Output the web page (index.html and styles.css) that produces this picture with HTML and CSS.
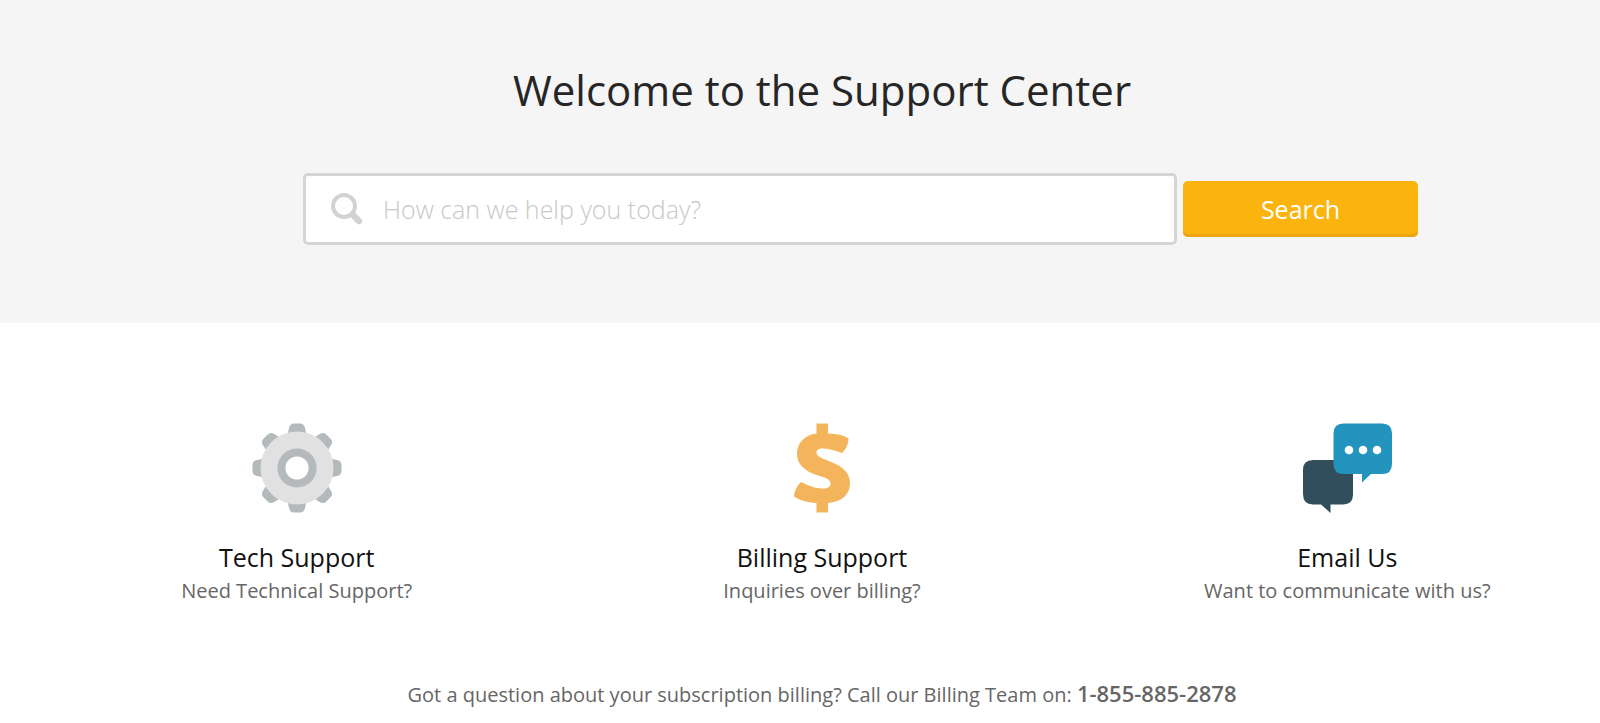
FILE: index.html
```
<!DOCTYPE html>
<html lang="en">
<head>
    <meta charset="UTF-8">
    <meta name="viewport" content="width=device-width, initial-scale=1.0">
    <title>Support Center</title>
    <link rel="stylesheet" href="styles.css">
</head>
<body>
    <header class="hero">
        <h1 class="hero-title">Welcome to the Support Center</h1>
        <form class="search-form">
            <label class="search-box">
                <svg class="search-icon" viewBox="0 0 32 32" aria-hidden="true">
                    <circle cx="13" cy="13" r="11" fill="none" stroke="#d2d2d2" stroke-width="4"/>
                    <path d="M22 22l6 6" stroke="#d2d2d2" stroke-width="6.5" stroke-linecap="round"/>
                </svg>
                <input type="text" class="search-input" aria-label="Search" placeholder="How can we help you today?">
            </label>
            <button type="submit" class="btn-search">Search</button>
        </form>
    </header>

    <main class="support">
        <div class="topics">
            <section class="topic">
                <svg class="topic-icon" viewBox="0 0 90 90" aria-hidden="true">
                    <defs>
                        <path id="tooth" d="M35.500 12L37 5Q38 0.500 42 0.500H48Q52 0.500 53 5L54.500 12Z"/>
                    </defs>
                    <g fill="#b4b9bc">
                        <use href="#tooth"/>
                        <use href="#tooth" transform="rotate(45 45 45)"/>
                        <use href="#tooth" transform="rotate(90 45 45)"/>
                        <use href="#tooth" transform="rotate(135 45 45)"/>
                        <use href="#tooth" transform="rotate(180 45 45)"/>
                        <use href="#tooth" transform="rotate(225 45 45)"/>
                        <use href="#tooth" transform="rotate(270 45 45)"/>
                        <use href="#tooth" transform="rotate(315 45 45)"/>
                    </g>
                    <circle cx="45" cy="45" r="36.5" fill="#e1e1e1"/>
                    <circle cx="45" cy="45" r="19.6" fill="#b4b9bc"/>
                    <circle cx="45" cy="45" r="11.6" fill="#fff"/>
                </svg>
                <h2 class="topic-title">Tech Support</h2>
                <p class="topic-text">Need Technical Support?</p>
            </section>
            <section class="topic">
                <svg class="topic-icon" viewBox="0 0 90 90" aria-hidden="true">
                    <path fill="#f4b45b" d="M39.500 0.500H51V10.500C60 11 68 12.500 71.500 15.500C71.500 21 69 26.500 65 30C57 27 51 25.500 46 25.500C41.500 25.500 39.500 27 39.500 29.500C39.500 33.500 45 35 53 38.500C66 43.500 73 50 73 60C73 71.500 65 79 51 80V89.500H39.500V80C30 79.500 21 76.500 17 73.500C17 69 20 62.500 24 59C33 63.500 40 65.500 46 65.500C51 65.500 53.500 63.500 53.500 60.500C53.500 56 48 54.500 41 52.500C27 48 20 41 20 31C20 20 27.500 12 39.500 10.500Z"/>
                </svg>
                <h2 class="topic-title">Billing Support</h2>
                <p class="topic-text">Inquiries over billing?</p>
            </section>
            <section class="topic">
                <svg class="topic-icon" viewBox="0 0 90 90" aria-hidden="true">
                    <path fill="#324d5b" d="M11 37H51V71Q51 81.500 40.500 81.500H28.500V90L19 81.500H11Q1 81.500 1 71V47Q1 37 11 37Z"/>
                    <path fill="#2394bd" d="M41.500 0.500H80Q90 0.500 90 10.500V41Q90 51 80 51H69L60 59.500V51H41.500Q31.500 51 31.500 41V10.500Q31.500 0.500 41.500 0.500Z"/>
                    <g fill="#fff">
                        <circle cx="47" cy="27" r="4.300"/>
                        <circle cx="61" cy="27" r="4.300"/>
                        <circle cx="75" cy="27" r="4.300"/>
                    </g>
                </svg>
                <h2 class="topic-title">Email Us</h2>
                <p class="topic-text">Want to communicate with us?</p>
            </section>
        </div>
        <p class="billing-call">Got a question about your subscription billing? Call our Billing Team on: <strong>1-855-885-2878</strong></p>
    </main>
</body>
</html>
```
FILE: styles.css
```
* {
    margin: 0;
    padding: 0;
    box-sizing: border-box;
}

body {
    font-family: 'Open Sans', 'Noto Sans', sans-serif;
    background: #fff;
    color: #666;
    overflow-x: hidden;
}

.hero {
    background: #f5f5f5;
    padding: 60px 0 78px 44px;
}

.hero-title {
    font-size: 42px;
    font-weight: 400;
    line-height: 60px;
    color: #262626;
    text-align: center;
    margin-bottom: 53px;
}

.search-form {
    display: flex;
    align-items: center;
    gap: 6px;
    padding: 0 182px 0 259px;
}

.search-box {
    flex: 1;
    display: flex;
    align-items: center;
    height: 72px;
    padding: 0 25px;
    background: #fff;
    border: 3px solid #d5d5d5;
    border-radius: 5px;
}

.search-icon {
    width: 32px;
    height: 32px;
    margin-right: 20px;
}

.search-input {
    flex: 1;
    min-width: 0;
    border: none;
    outline: none;
    background: none;
    font-family: inherit;
    font-size: 25px;
    font-weight: 300;
    color: #444;
}

.search-input::placeholder {
    color: #c8c8c8;
}

.btn-search {
    width: 235px;
    height: 56px;
    border: none;
    border-radius: 5px;
    box-shadow: inset 0 -3px #eda411;
    background: #fbb40e;
    color: #fff;
    font-family: inherit;
    font-size: 25px;
    cursor: pointer;
}

.support {
    padding: 100px 0 16px 44px;
}

.topics {
    display: flex;
    margin: 0 -10px 70px;
}

.topic {
    flex: 1;
    text-align: center;
}

.topic-icon {
    display: block;
    width: 90px;
    height: 90px;
    margin: 0 auto 26px;
}

.topic-title {
    font-size: 25px;
    font-weight: 400;
    line-height: 36px;
    color: #111;
}

.topic-text {
    font-size: 20px;
    line-height: 32px;
}

.billing-call {
    font-size: 20px;
    line-height: 32px;
    text-align: center;
}

.billing-call strong {
    font-size: 22px;
    font-weight: 600;
}
```
